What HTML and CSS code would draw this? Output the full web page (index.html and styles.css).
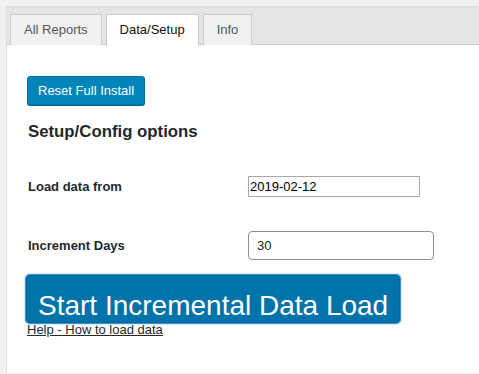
FILE: index.html
```html
<!DOCTYPE html>
<html>
<head>
<meta charset="utf-8">
<link rel="stylesheet" href="styles.css">
</head>
<body>
<div class="wrap">
  <div class="tabs">
    <span class="tab">All Reports</span>
    <span class="tab active">Data/Setup</span>
    <span class="tab">Info</span>
  </div>
  <div class="content">
    <button class="btn-reset">Reset Full Install</button>
    <h2 class="title">Setup/Config options</h2>
    <div class="form">
      <label class="lbl">Load data from</label>
      <input class="inp-date" type="text" value="2019-02-12">
      <label class="lbl">Increment Days</label>
      <input class="inp-days" type="text" value="30">
    </div>
    <div class="actions">
      <button class="btn-big">Start Incremental Data Load</button>
      <a class="help" href="#">Help - How to load data</a>
    </div>
  </div>
</div>
</body>
</html>
```
FILE: styles.css
```css
html, body {
  margin: 0;
  padding: 0;
  height: 100%;
}
body {
  background: #f1f1f1;
  font-family: "Liberation Sans", Arial, sans-serif;
  font-size: 13px;
  color: #23282d;
  overflow: hidden;
}
.wrap {
  margin: 6px 0 0 6px;
  border-top: 1px solid #dcdcdc;
  border-left: 1px solid #dcdcdc;
  background: #fff;
  height: calc(100% - 7px);
  box-sizing: border-box;
}
.tabs {
  background: #e5e5e5;
  border-bottom: 1px solid #ccc;
  padding: 7px 0 0 3px;
  height: 30px;
  display: flex;
  gap: 4px;
}
.tab {
  display: block;
  height: 30px;
  line-height: 30px;
  padding: 0 13px;
  border: 1px solid #ccc;
  border-bottom: none;
  background: #f1f1f1;
  color: #555;
  font-size: 13px;
  box-sizing: content-box;
}
.tab.active {
  background: #fff;
  color: #111;
  height: 31px;
  margin-bottom: -1px;
}
.content {
  padding: 31px 0 0 20px;
}
.btn-reset {
  display: block;
  height: 29px;
  margin: 0;
  padding: 0 10px;
  background: #0085ba;
  border: 1px solid #0073aa;
  border-radius: 3px;
  box-shadow: 0 1px 0 #006799;
  color: #fff;
  font-family: "Liberation Sans", Arial, sans-serif;
  font-size: 13px;
  line-height: 27px;
}
.title {
  margin: 17px 0 0 1px;
  font-size: 16.8px;
  line-height: 20px;
  font-weight: bold;
  color: #23282d;
}
.form {
  display: grid;
  grid-template-columns: 220px auto;
  align-items: center;
  justify-items: start;
  row-gap: 34px;
  margin-top: 34px;
  padding-left: 1px;
}
.lbl {
  font-weight: bold;
  font-size: 13px;
}
.inp-date {
  width: 172px;
  height: 21px;
  box-sizing: border-box;
  margin: 0;
  padding: 0 1px;
  border: 1px solid #a9a9a9;
  border-radius: 0;
  font-family: "Liberation Sans", Arial, sans-serif;
  font-size: 13px;
  color: #000;
  background: #fff;
}
.inp-days {
  width: 186px;
  height: 29px;
  box-sizing: border-box;
  margin: 0;
  padding: 0 8px;
  border: 1px solid #8c8f94;
  border-radius: 4px;
  font-family: "Liberation Sans", Arial, sans-serif;
  font-size: 13px;
  color: #222;
  background: #fff;
}
.actions {
  margin-top: 15px;
  display: flex;
  flex-direction: column;
  align-items: flex-start;
}
.btn-big {
  display: block;
  margin: 0 0 0 -1px;
  height: 48px;
  box-sizing: border-box;
  padding: 14px 11px 0;
  background: #0073aa;
  border: 1px solid #006799;
  border-radius: 4px;
  box-shadow: 0 0 0 1px #3a93cf, 0 0 2px 1px rgba(30, 140, 190, 0.6);
  color: #fff;
  font-family: "Liberation Sans", Arial, sans-serif;
  font-size: 28px;
  line-height: 32px;
  white-space: nowrap;
}
.help {
  display: block;
  margin-top: -1px;
  color: #23282d;
  font-size: 13px;
  text-decoration: underline;
}
```
